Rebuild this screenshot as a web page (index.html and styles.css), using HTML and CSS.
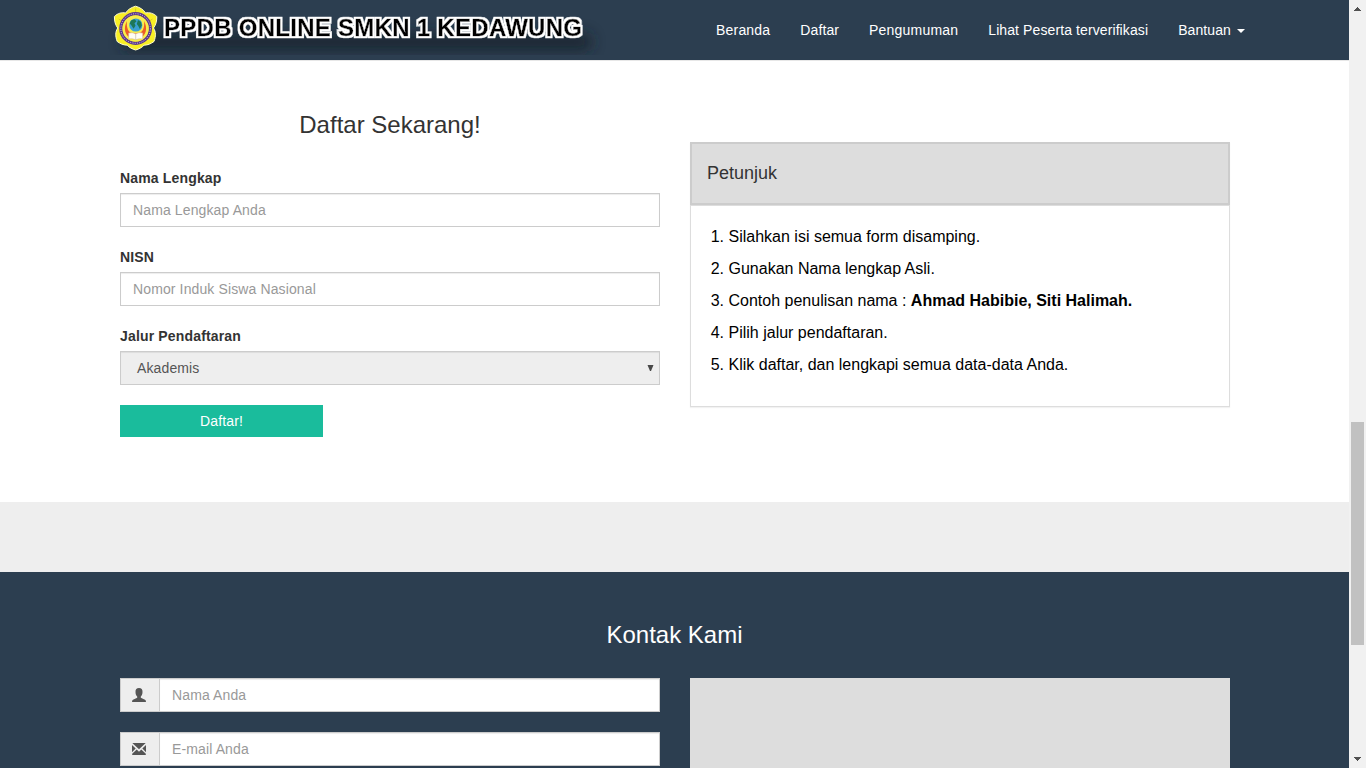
FILE: index.html
```html
<!DOCTYPE html>
<html lang="id">
<head>
<meta charset="utf-8">
<title>PPDB Online SMKN 1 Kedawung</title>
<link rel="stylesheet" href="styles.css">
</head>
<body>
<div class="window">
  <div class="page">
    <header class="navbar">
      <svg class="brand" width="510" height="60" viewBox="0 0 510 60" role="img" aria-label="PPDB Online SMKN 1 Kedawung">
        <defs>
          <filter id="soft" x="-20%" y="-150%" width="140%" height="400%"><feGaussianBlur stdDeviation="7"/></filter>
          <filter id="outline" x="-2%" y="-20%" width="104%" height="140%">
            <feMorphology in="SourceAlpha" operator="dilate" radius="1.500" result="wide"/>
            <feGaussianBlur in="wide" stdDeviation=".35" result="edge"/>
            <feFlood flood-color="#fff"/>
            <feComposite in2="edge" operator="in" result="halo"/>
            <feMerge><feMergeNode in="halo"/><feMergeNode in="SourceGraphic"/></feMerge>
          </filter>
          <clipPath id="logoBox"><rect width="510" height="55"/></clipPath>
        </defs>
        <g clip-path="url(#logoBox)">
          <rect x="15" y="33" width="470" height="18" rx="8" fill="#15212a" opacity=".75" filter="url(#soft)"/>
        </g>
        <path d="M28.600 6.200C33 7.500 36.500 9.500 38.500 13c4-.8 8 .2 11.300 3.500 0 5-.8 8-3.300 11.500 2.500 4 2.500 8 .5 13.500-3.500 2.500-6 3.500-10 3.700-2 2.300-5 3.800-8.400 4.800-3.400-1-6.400-2.500-8.400-4.800-4-.2-6.500-1.200-10-3.700-2-5.500-2-9.500.5-13.500C8.200 24.500 7.400 21.500 7.400 16.500 10.700 13.200 14.700 12.200 18.700 13c2-3.500 5.500-5.500 9.900-6.800z" fill="#f8ef24" stroke="#fffbd0" stroke-width="1" stroke-linejoin="round"/>
        <path d="M28.600 8.500v4M45.500 19l-3 2M42.500 39l-2-2M14.700 39l2-2M11.700 19l3 2" stroke="#c7b52a" stroke-width=".7"/>
        <circle cx="28.600" cy="28.500" r="14.800" fill="none" stroke="#5d388c" stroke-width="3.200"/>
        <circle cx="28.600" cy="28.500" r="14.800" fill="none" stroke="#d9cfe3" stroke-width="1" stroke-dasharray="1 1.300"/>
        <circle cx="28.600" cy="28.500" r="13" fill="#f7ed4c"/>
        <path d="M20 21c-4 7-2 15 4 17h9c6-2 8-10 4-17 1 7-2 12-5 12h-7c-3 0-6-5-5-12z" fill="#ed5b28"/>
        <circle cx="28.800" cy="25" r="6.600" fill="#3aa0d0"/>
        <path d="M24 20.500l3.500-1.300 2 2-2 2 1 2.600-2 3-2-3.300-1.800-2zM31 20l3 2 .8 3.500-2 3.500-1.500-3-1.500-2z" fill="#1d7757"/>
        <path d="M21.700 33q3.500-1 7 .7 3.500-1.700 7-.7v6q-3.500-.8-7 .7-3.500-1.500-7-.7z" fill="#fffdf4" stroke="#d7ba88" stroke-width=".6"/>
        <path d="M28.700 34v5.500" stroke="#b8aca2" stroke-width=".6"/>
        <text class="brand-name" filter="url(#outline)" x="57" y="36" textLength="418" lengthAdjust="spacing">PPDB ONLINE SMKN 1 KEDAWUNG</text>
      </svg>
      <nav class="menu">
        <a class="wide">Beranda</a><a>Daftar</a><a class="wide">Pengumuman</a><a>Lihat Peserta terverifikasi</a><a>Bantuan<i class="caret"></i></a>
      </nav>
    </header>

    <section class="register">
      <form class="column form">
        <h2 class="title">Daftar Sekarang!</h2>
        <label class="label" for="nama">Nama Lengkap</label>
        <input class="field" id="nama" placeholder="Nama Lengkap Anda">
        <label class="label" for="nisn">NISN</label>
        <input class="field" id="nisn" placeholder="Nomor Induk Siswa Nasional">
        <span class="label">Jalur Pendaftaran</span>
        <div class="field select"><span>Akademis</span><svg width="7" height="7" viewBox="0 0 7 7"><path d="M.5 0h6L4 6H3z" fill="#484848"/></svg></div>
        <button class="submit" type="button">Daftar!</button>
      </form>
      <aside class="column guide">
        <div class="guide-head">Petunjuk</div>
        <ol class="steps">
          <li>Silahkan isi semua form disamping.</li>
          <li>Gunakan Nama lengkap Asli.</li>
          <li>Contoh penulisan nama : <b>Ahmad Habibie, Siti Halimah.</b></li>
          <li>Pilih jalur pendaftaran.</li>
          <li>Klik daftar, dan lengkapi semua data-data Anda.</li>
        </ol>
      </aside>
    </section>
    <div class="band"></div>
    <section class="contact">
      <h2 class="title contact-title">Kontak Kami</h2>
      <div class="contact-row">
        <div class="column">
          <div class="group">
            <span class="addon"><svg width="14" height="14" viewBox="0 0 14 14"><path d="M7 0C4.600 0 3.300 1.500 3.500 4c0 2 .7 3.700 1.700 4.600v1.200L1 11.700Q0 12.200 0 14h14q0-1.800-1-2.300L8.800 9.800V8.600C9.800 7.700 10.500 6 10.500 4 10.700 1.500 9.400 0 7 0z" fill="#555"/></svg></span>
            <input class="field grouped" placeholder="Nama Anda" aria-label="Nama Anda">
          </div>
          <div class="group">
            <span class="addon"><svg width="14" height="12" viewBox="0 0 14 12"><path d="M.3 0h13.400L7 6.300zM0 2l3.700 3.600L0 9.200zM14 2v7.200l-3.700-3.600zM.2 12v-1.200L4.700 6.600 7 8.700l2.300-2.100 4.500 4.200V12z" fill="#555"/></svg></span>
            <input class="field grouped" placeholder="E-mail Anda" aria-label="E-mail Anda">
          </div>
        </div>
        <div class="column map"></div>
      </div>
    </section>
  </div>
  <div class="scrollbar">
    <svg width="7" height="4" viewBox="0 0 7 4"><path d="M0 4V3h1V2h1V1h1V0h1v1h1v1h1v1h1v1z" fill="#505050"/></svg>
    <div class="track"><div class="thumb"></div></div>
    <svg width="7" height="4" viewBox="0 0 7 4"><path d="M0 0h7v1H6v1H5v1H4v1H3V3H2V2H1V1H0z" fill="#505050"/></svg>
  </div>
</div>
</body>
</html>
```
FILE: styles.css
```css
* { box-sizing: border-box; }
body { margin: 0; overflow: hidden; font: 14px/20px "Liberation Sans", Arial, sans-serif; color: #333; }
.window { display: flex; width: 1366px; height: 768px; overflow: hidden; }
.page { width: 1349px; height: 768px; overflow: hidden; background: #fff; }
.navbar { display: flex; justify-content: space-between; height: 61px; padding: 0 89px 0 107px; background: #2c3e50; border-bottom: 1px solid #e7e7e7; }
.brand { display: block; }
.brand-name { font: bold 24px "Liberation Sans", Arial, sans-serif; fill: #000; stroke: #000; stroke-width: .3px; }
.menu { display: flex; padding-top: 20px; }
.menu a { display: flex; align-items: center; height: 20px; padding: 0 15px; color: #fff; letter-spacing: .1px; white-space: nowrap; }
.menu .wide { letter-spacing: .2px; }
.caret { width: 0; margin: 1px 0 0 6px; border: 4px solid transparent; border-top-color: #fff; border-bottom: 0; }
.register { display: flex; gap: 30px; height: 441px; padding: 0 120px; }
.column { width: 540px; flex: none; }
.title { margin: 0; font-size: 24px; line-height: 26px; font-weight: 400; text-align: center; }
.form { padding-top: 51px; }
.form .title { margin-bottom: 30px; }
.label { display: block; margin-bottom: 5px; font-weight: 700; letter-spacing: .16px; }
.field { display: block; width: 100%; height: 34px; margin: 0 0 20px; padding: 6px 12px; border: 1px solid #ccc; border-radius: 0; background: #fff; box-shadow: inset 0 1px 1px rgba(0,0,0,.075); font: 14px/20px "Liberation Sans", Arial, sans-serif; letter-spacing: .12px; color: #555; }
.field::placeholder { color: #999; opacity: 1; }
.select { display: flex; justify-content: space-between; align-items: center; padding: 6px 5px 6px 16px; background: #eee; }
.submit { display: block; width: 203px; height: 32px; padding: 0; border: 0; background: #1abc9c; color: #fff; font: 14px/32px "Liberation Sans", Arial, sans-serif; letter-spacing: .15px; }
.guide { height: 265px; margin-top: 81px; border: 1px solid #ddd; border-top: 0; box-shadow: 0 1px 1px rgba(0,0,0,.05); }
.guide-head { height: 63px; margin: 0 -1px; padding: 19px 15px; border: 2px solid #ccc; background: #ddd; font-size: 18px; line-height: 20px; box-shadow: 0 1px 0 #ddd; }
.steps { margin: 0; padding: 16px 0 0 37.5px; color: #000; font-size: 16px; line-height: 32px; }
.band { height: 70px; background: #eee; }
.contact { height: 196px; padding: 50px 120px 0; background: #2c3e50; color: #fff; }
.contact-title { margin-bottom: 30px; }
.contact-row { display: flex; gap: 30px; }
.group { display: flex; height: 34px; margin-bottom: 20px; }
.addon { display: flex; align-items: center; width: 39px; flex: none; padding-left: 11px; border: 1px solid #ccc; border-right: 0; background: #eee; }
.grouped { flex: 1; margin: 0; }
.map { height: 90px; background: #ddd; }
.scrollbar { display: flex; flex-direction: column; align-items: center; width: 17px; height: 768px; padding: 7px 0; background: #f1f1f1; }
.track { flex: 1; width: 13px; padding-top: 411px; }
.thumb { height: 223px; background: #c1c1c1; }
```
